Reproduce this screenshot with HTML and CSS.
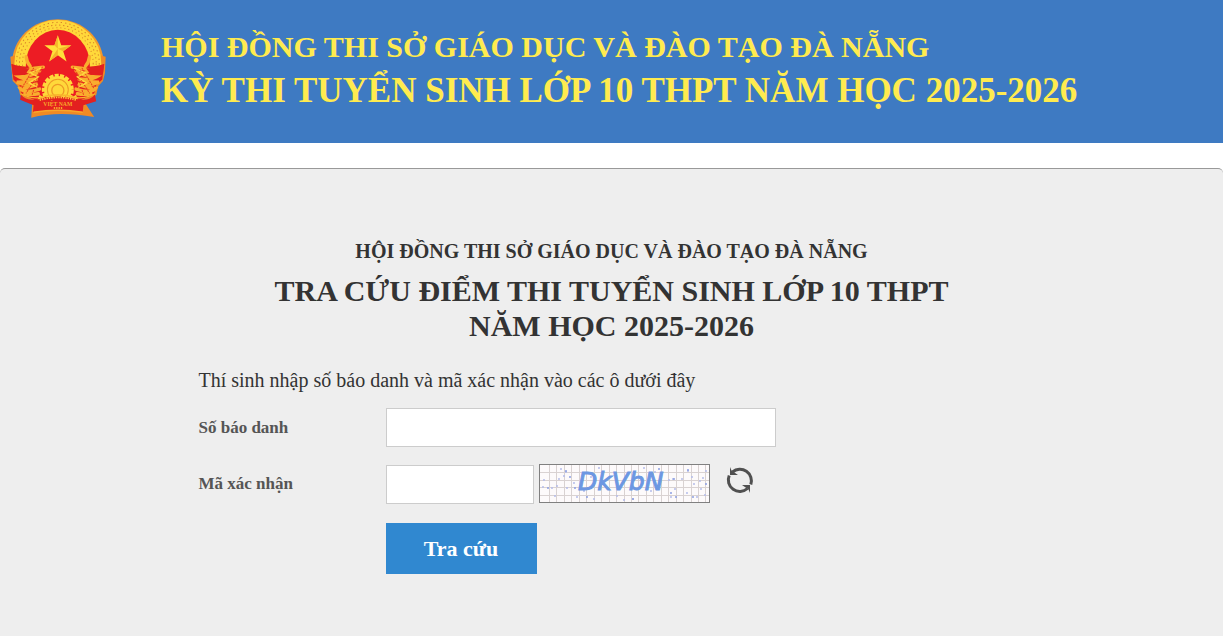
FILE: index.html
```html
<!DOCTYPE html>
<html lang="vi">
<head>
<meta charset="utf-8">
<meta name="viewport" content="width=device-width, initial-scale=1">
<title>Tra cứu điểm thi tuyển sinh lớp 10 THPT</title>
<link rel="stylesheet" href="styles.css">
</head>
<body>
<header class="banner">
  <svg class="emblem" viewBox="0 0 285 294" role="img" aria-label="Quốc huy Việt Nam">
    <path d="M66 248 L222 248 L250 291 Q142 272 63 293 Z" fill="#f08a24"/>
    <ellipse cx="142" cy="133" rx="136" ry="132" fill="#f2992c"/>
    <path d="M1 112 L18 108 L18 165 L34 210 L50 232 L234 232 L250 210 L268 165 L268 108 L284 112 L282 160 L276 184 L262 200 L256 226 L234 240 L50 240 L30 226 L24 200 L8 184 Z" fill="#f08a24"/>
    <ellipse cx="142" cy="132" rx="112" ry="112" fill="none" stroke="#ffd83a" stroke-width="34"/>
    <g fill="none" stroke="#d8842a" stroke-width="3">
      <ellipse cx="142" cy="132" rx="123" ry="122" stroke-dasharray="4 9"/>
      <ellipse cx="142" cy="132" rx="114" ry="114" stroke-dasharray="4 8"/>
      <ellipse cx="142" cy="132" rx="105" ry="106" stroke-dasharray="3 9"/>
    </g>
    <ellipse cx="142" cy="138" rx="95" ry="106" fill="#ed1c24"/>
    <path d="M5 134 Q28 142 60 142 L84 130 L90 220 L80 244 L34 222 L28 196 L10 180 Z" fill="#e3201f"/>
    <path d="M279 134 Q256 142 224 142 L200 130 L194 220 L204 244 L250 222 L256 196 L274 180 Z" fill="#e3201f"/>
    <path d="M142 48 L152 78 L182 78 L158 96 L168 126 L142 108 L116 126 L126 96 L102 78 L132 78 Z" fill="#ffe03a"/>
    <path d="M142 48 V88 L132 78 Z M182 78 L142 88 L158 96 Z M116 126 L142 88 L142 108 Z" fill="#f4b52a"/>
    <g fill="none" stroke-linecap="round">
      <path d="M99 143 Q72 144 47 152 Q58 163 80 161 M48 112 Q50 130 60 140 M88 154 Q66 170 28 172 Q50 184 82 177 Q58 186 20 188 Q52 202 82 192 Q60 204 30 206 Q40 222 88 208 M44 222 Q64 226 84 222" stroke="#f9ad2e" stroke-width="10"/>
      <path d="M96 143 L48 220 M70 146 L36 204 M86 160 L66 224" stroke="#e8421f" stroke-width="3" stroke-dasharray="4 5"/>
      <path d="M92 146 L60 160 L84 172 L56 190 L80 202" stroke="#ffdc40" stroke-width="4" stroke-dasharray="6 4"/>
    </g>
    <g transform="translate(284 0) scale(-1 1)" fill="none" stroke-linecap="round">
      <path d="M99 143 Q72 144 47 152 Q58 163 80 161 M48 112 Q50 130 60 140 M88 154 Q66 170 28 172 Q50 184 82 177 Q58 186 20 188 Q52 202 82 192 Q60 204 30 206 Q40 222 88 208 M44 222 Q64 226 84 222" stroke="#f9ad2e" stroke-width="10"/>
      <path d="M96 143 L48 220 M70 146 L36 204 M86 160 L66 224" stroke="#e8421f" stroke-width="3" stroke-dasharray="4 5"/>
      <path d="M92 146 L60 160 L84 172 L56 190 L80 202" stroke="#ffdc40" stroke-width="4" stroke-dasharray="6 4"/>
    </g>
    <path d="M4 134 Q30 148 58 146 L44 166 Q24 160 8 164 Z M280 134 Q254 148 226 146 L240 166 Q260 160 276 164 Z" fill="#e3201f"/>
    <circle cx="142" cy="210" r="43" fill="none" stroke="#ffd83a" stroke-width="9" stroke-dasharray="12 4"/>
    <circle cx="142" cy="210" r="41" fill="#ffd83a"/>
    <circle cx="142" cy="210" r="31" fill="none" stroke="#ee9a26" stroke-width="3"/>
    <circle cx="142" cy="212" r="18" fill="none" stroke="#ee9a26" stroke-width="4"/>
    <path d="M32 224 Q50 246 84 238 Q142 222 200 238 Q236 246 252 224 L256 244 L218 256 L216 276 Q142 266 68 276 L70 256 L30 240 Z" fill="#e3201f"/>
    <path d="M32 222 Q60 236 86 234 Q142 216 198 234 Q226 236 252 222" fill="none" stroke="#f9b52c" stroke-width="4"/>
    <path d="M88 241 Q142 225 198 241" fill="none" stroke="#ffc63a" stroke-width="5" stroke-dasharray="4 3"/>
    <path d="M70 277 Q142 265 216 277" fill="none" stroke="#f7a829" stroke-width="4"/>
    <path d="M130 264H156" fill="none" stroke="#f7a829" stroke-width="6" stroke-dasharray="4 3"/>
    <text x="142" y="257" text-anchor="middle" class="emblem-name">VIỆT NAM</text>
  </svg>
  <div class="banner-text">
    <p class="banner-org">HỘI ĐỒNG THI SỞ GIÁO DỤC VÀ ĐÀO TẠO ĐÀ NẴNG</p>
    <p class="banner-exam">KỲ THI TUYỂN SINH LỚP 10 THPT NĂM HỌC 2025-2026</p>
  </div>
</header>
<main class="panel">
  <div class="content">
    <p class="org">HỘI ĐỒNG THI SỞ GIÁO DỤC VÀ ĐÀO TẠO ĐÀ NẴNG</p>
    <h1 class="title">TRA CỨU ĐIỂM THI TUYỂN SINH LỚP 10 THPT<br>NĂM HỌC 2025-2026</h1>
    <p class="hint">Thí sinh nhập số báo danh và mã xác nhận vào các ô dưới đây</p>
    <form class="lookup">
      <label class="label" for="sbd">Số báo danh</label>
      <input class="input input-wide" id="sbd" type="text">
      <label class="label" for="code">Mã xác nhận</label>
      <div class="code-row">
        <input class="input input-code" id="code" type="text">
        <svg class="captcha" viewBox="0 0 171 39" role="img" aria-label="Mã xác nhận">
          <rect width="171" height="39" fill="#fdfafb"/>
          <path d="M10.5 0V39M17.5 0V39M25.5 0V39M32.5 0V39M40.5 0V39M47.5 0V39M55.5 0V39M62.5 0V39M70.5 0V39M77.5 0V39M85.5 0V39M92.5 0V39M99.5 0V39M107.5 0V39M114.5 0V39M122.5 0V39M129.5 0V39M137.5 0V39M144.5 0V39M152.5 0V39M159.5 0V39M166.5 0V39M0 8.5H171M0 16.5H171M0 23.5H171M0 31.5H171" stroke="#d9d2d2" fill="none"/>
          <path d="M5 16h0M4 23h0M13 24h0M20 15h0M22 5h0M27 8h0M25 12h0M18 22h0M28 24h0M35 19h0M16 32h0M38 33h0M45 27h0M52 13h0M55 35h0M60 4h0M78 32h0M85 36h0M94 35h0M105 4h0M112 27h0M116 8h0M121 20h0M130 16h0M134 15h0M136 25h0M132 33h0M143 15h0M149 7h0M153 13h0M155 20h0M158 33h0M161 17h0M164 14h0M167 7h0M162 25h0M166 31h0M148 29h0" stroke="#b4bcea" stroke-width="2" stroke-linecap="round"/>
          <path d="M9 24h0M27 7h0M31 13h0M36 24h0M48 33h0M94 35h0M120 5h0M135 15h0M137 33h0M149 6h0M154 33h0M167 20h0M132 29h0" stroke="#8c9fe2" stroke-width="2" stroke-linecap="round"/>
          <text x="39" y="26" class="captcha-text">DkVbN</text>
          <rect x=".5" y=".5" width="170" height="38" fill="none" stroke="#808080"/>
        </svg>
        <button class="refresh" type="button" aria-label="Đổi mã xác nhận">
          <svg viewBox="0 0 28 28" width="28" height="28">
            <g fill="none" stroke="#505050" stroke-width="3">
              <path d="M6.5 6 A11.5 11.5 0 0 1 24.8 18.5"/>
              <path d="M21.5 22.5 A11.5 11.5 0 0 1 3.2 9.5"/>
            </g>
            <path d="M4 1 L5.5 4.5 L12 9 H4 Z M24 27 L22.5 23.5 L16 19 H24 Z" fill="#505050"/>
          </svg>
        </button>
      </div>
      <button class="submit" type="submit">Tra cứu</button>
    </form>
  </div>
</main>
</body>
</html>
```

FILE: styles.css
```css
* { box-sizing: border-box; }
body {
  margin: 0;
  min-height: 100vh;
  display: flex;
  flex-direction: column;
  background: #fff;
  color: #333;
  font-family: "Liberation Serif", "Times New Roman", serif;
}
p, h1 { margin: 0; }
.banner {
  display: flex;
  align-items: flex-start;
  gap: 55px;
  padding: 19px 10px 25px;
  background: #3e7ac2;
}
.emblem { width: 96px; height: 99px; flex: none; }
.emblem-name { font: bold 17px "Liberation Serif", serif; fill: #f7a829; }
.banner-text { padding-top: 8px; color: #ffeb4f; font-weight: bold; }
.banner-org { font-size: 30px; line-height: 40px; }
.banner-exam { font-size: 35px; line-height: 48px; }
.panel {
  flex: 1;
  margin-top: 25px;
  padding: 70px 16px 61px;
  background: #eee;
  border-top: 1px solid #999;
  border-radius: 5px 5px 0 0;
}
.content { max-width: 826px; margin: 0 auto; }
.org { font-size: 20px; line-height: 24px; font-weight: bold; text-align: center; }
.title { margin-top: 10px; font-size: 30px; line-height: 35px; font-weight: bold; text-align: center; }
.hint { margin-top: 25px; font-size: 20px; line-height: 24px; }
.lookup {
  display: grid;
  grid-template-columns: 187px 1fr;
  align-items: center;
  row-gap: 17px;
  margin-top: 16px;
}
.label { font-size: 17px; line-height: 24px; font-weight: bold; color: #555; }
.input {
  height: 39px;
  padding: 0 10px;
  border: 1px solid #ccc;
  background: #fff;
  font: 18px "Liberation Serif", serif;
}
.input-wide { width: 390px; max-width: 100%; }
.input-code { width: 148px; margin-top: 1px; }
.code-row { display: flex; align-items: flex-start; gap: 5px; }
.captcha { width: 171px; height: 39px; }
.captcha-text { font: italic 25px "DejaVu Sans", sans-serif; fill: #6c97e2; stroke: #6c97e2; }
.refresh { height: 28px; margin: 2px 0 0 11px; padding: 0; border: 0; background: none; }
.refresh svg { display: block; }
.submit {
  grid-column: 2;
  justify-self: start;
  width: 151px;
  height: 51px;
  margin-top: 2px;
  border: 0;
  background: #3088d0;
  color: #fff;
  font: bold 22px "Liberation Serif", serif;
}
```
